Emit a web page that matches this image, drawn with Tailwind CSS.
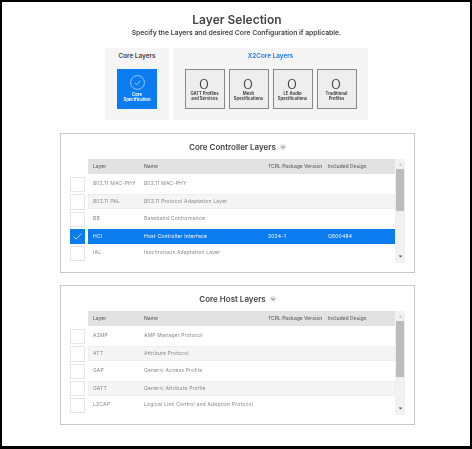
<!DOCTYPE html>
<html><head><meta charset="utf-8"><script src="https://cdn.jsdelivr.net/npm/@tailwindcss/browser@4"></script></head>
<body class="bg-white">
<div class="w-[472px] h-[449px] overflow-hidden border-x-2 border-t-2 border-b-[3px] border-black bg-white font-['Inter','Liberation_Sans',sans-serif] text-[#555] flex flex-col items-center">
  <h1 class="mt-[10px] ml-[2px] h-[16px] leading-[16px] text-[12px] font-semibold text-[#444] blur-[0.3px]">Layer Selection</h1>
  <p class="ml-[1px] h-[10px] leading-[10px] text-[6.8px] font-semibold text-[#444] blur-[0.3px]">Specify the Layers and desired Core Configuration if applicable.</p>
  <div class="mt-[10px] ml-[1px] w-[263px] flex gap-[4px] blur-[0.3px]">
    <div class="w-[64px] h-[72px] bg-[#f5f5f5] flex flex-col items-center">
      <div class="mt-[3px] h-[10px] leading-[10px] text-[6.4px] font-semibold text-[#444]">Core Layers</div>
      <div class="mt-[8px] w-[40px] h-[40px] bg-[#0a7cf0] flex flex-col items-center text-white">
        <svg class="mt-[6px]" width="15" height="15" viewBox="0 0 15 15" fill="none" stroke="#d6e9ff" stroke-width="0.7"><circle cx="7.5" cy="7.5" r="6.9"/><path d="M4.6 7.7l2 2 3.8-4"/></svg>
        <div class="mt-[2px] text-[4.2px] leading-[5px] font-bold text-center">Core<br>Specification</div>
      </div>
    </div>
    <div class="flex-1 h-[72px] bg-[#f5f5f5] flex flex-col items-center">
      <div class="mt-[3px] h-[10px] leading-[10px] text-[6.4px] font-semibold text-[#1d78e6]">X2Core Layers</div>
      <div class="mt-[8px] flex gap-[4px]">
        <div class="w-[40px] h-[40px] border border-[#888] bg-[#eeeeee] flex flex-col items-center"><div class="mt-[7px] h-[14px] leading-[14px] text-[13px] font-light scale-x-[1.3] text-[#444]">0</div><div class="text-[4.2px] leading-[5.3px] font-bold text-center text-[#444]">GATT Profiles<br>and Services</div></div>
        <div class="w-[40px] h-[40px] border border-[#888] bg-[#eeeeee] flex flex-col items-center"><div class="mt-[7px] h-[14px] leading-[14px] text-[13px] font-light scale-x-[1.3] text-[#444]">0</div><div class="text-[4.2px] leading-[5.3px] font-bold text-center text-[#444]">Mesh<br>Specifications</div></div>
        <div class="w-[40px] h-[40px] border border-[#888] bg-[#eeeeee] flex flex-col items-center"><div class="mt-[7px] h-[14px] leading-[14px] text-[13px] font-light scale-x-[1.3] text-[#444]">0</div><div class="text-[4.2px] leading-[5.3px] font-bold text-center text-[#444]">LE Audio<br>Specifications</div></div>
        <div class="w-[40px] h-[40px] border border-[#888] bg-[#eeeeee] flex flex-col items-center"><div class="mt-[7px] h-[14px] leading-[14px] text-[13px] font-light scale-x-[1.3] text-[#444]">0</div><div class="text-[4.2px] leading-[5.3px] font-bold text-center text-[#444]">Traditional<br>Profiles</div></div>
      </div>
    </div>
  </div>

  <section class="mt-[13px] ml-[3px] w-[355px] h-[140px] shrink-0 border border-[#c8c8c8] bg-white pl-[9px] pt-[7px] blur-[0.3px]">
    <div class="h-[12px] ml-[-9px] flex items-center justify-center gap-[4px] text-[8px] leading-[12px] font-semibold text-[#444]">Core Controller Layers
      <svg width="6" height="6" viewBox="0 0 6 6"><circle cx="3" cy="3" r="3" fill="#e4e4e4"/><path d="M1.6 2.4L3 3.9l1.4-1.5" fill="none" stroke="#555" stroke-width="0.8"/></svg>
    </div>
    <div class="mt-[6px] flex">
      <div class="w-[15px] mr-[3px] flex flex-col pt-[18px]">
        <div class="w-[15px] h-[15.3px] mb-[2px] border border-[#e5e5e5] bg-white"></div>
        <div class="w-[15px] h-[15.3px] mb-[2px] border border-[#e5e5e5] bg-white"></div>
        <div class="w-[15px] h-[15.3px] mb-[2px] border border-[#e5e5e5] bg-white"></div>
        <div class="w-[15px] h-[15.3px] mb-[2px] bg-[#0a7cf0] flex items-center justify-center"><svg width="11" height="11" viewBox="0 0 11 11" fill="none" stroke="#fff" stroke-width="0.7"><path d="M1.8 5.8l2.4 2.4 5.2-5.6"/></svg></div>
        <div class="w-[15px] h-[15.3px] border border-[#e5e5e5] bg-white"></div>
      </div>
      <div class="w-[307px] text-[5px] tracking-[0.2px] text-[#888]">
        <div class="h-[15px] bg-[#e2e2e2] flex items-center text-[#666] font-medium tracking-normal"><span class="w-[56px] pl-[5px]">Layer</span><span class="w-[124px]">Name</span><span class="w-[60px]">TCRL Package Version</span><span>Included Design</span></div>
        <div class="h-[18px] mt-[1px] flex items-center"><span class="w-[56px] pl-[5px]">802.11 MAC-PHY</span><span class="w-[124px]">802.11 MAC-PHY</span></div>
        <div class="h-[15.3px] mt-[1px] flex items-center bg-[#f5f5f5] border border-[#eee]"><span class="w-[55px] pl-[4px]">802.11 PAL</span><span class="w-[124px]">802.11 Protocol Adaptation Layer</span></div>
        <div class="h-[17.4px] mt-[1px] flex items-center"><span class="w-[56px] pl-[5px]">BB</span><span class="w-[124px]">Baseband Conformance</span></div>
        <div class="h-[15.3px] mt-[1px] flex items-center bg-[#0a7cf0] text-white"><span class="w-[56px] pl-[5px]">HCI</span><span class="w-[124px]">Host Controller Interface</span><span class="w-[60px]">2024-1</span><span>Q500464</span></div>
        <div class="h-[17.3px] flex items-center"><span class="w-[56px] pl-[5px]">IAL</span><span class="w-[124px]">Isochronous Adaptation Layer</span></div>
      </div>
      <div class="w-[10px] h-[104px] bg-[#f1f1f1] flex flex-col items-center">
        <svg class="mt-[4px]" width="5" height="3" viewBox="0 0 5 3"><path d="M2.5 0.4L4.4 2.6H0.6z" fill="#c0c0c0"/></svg>
        <div class="mt-[3px] w-[8px] h-[42px] bg-[#bcbcbc]"></div>
        <svg class="mt-[44px]" width="5" height="3" viewBox="0 0 5 3"><path d="M2.5 2.6L4.4 0.4H0.6z" fill="#555"/></svg>
      </div>
    </div>
  </section>

  <section class="mt-[12px] ml-[3px] w-[355px] h-[140px] shrink-0 border border-[#c8c8c8] bg-white pl-[9px] pt-[7px] blur-[0.3px]">
    <div class="h-[12px] ml-[-9px] flex items-center justify-center gap-[4px] text-[8px] leading-[12px] font-semibold text-[#444]">Core Host Layers
      <svg width="6" height="6" viewBox="0 0 6 6"><circle cx="3" cy="3" r="3" fill="#e4e4e4"/><path d="M1.6 2.4L3 3.9l1.4-1.5" fill="none" stroke="#555" stroke-width="0.8"/></svg>
    </div>
    <div class="mt-[6px] flex">
      <div class="w-[15px] mr-[3px] flex flex-col pt-[18px]">
        <div class="w-[15px] h-[15.3px] mb-[2px] border border-[#e5e5e5] bg-white"></div>
        <div class="w-[15px] h-[15.3px] mb-[2px] border border-[#e5e5e5] bg-white"></div>
        <div class="w-[15px] h-[15.3px] mb-[2px] border border-[#e5e5e5] bg-white"></div>
        <div class="w-[15px] h-[15.3px] mb-[2px] border border-[#e5e5e5] bg-white"></div>
        <div class="w-[15px] h-[15.3px] border border-[#e5e5e5] bg-white"></div>
      </div>
      <div class="w-[307px] text-[5px] tracking-[0.2px] text-[#888]">
        <div class="h-[15px] bg-[#e2e2e2] flex items-center text-[#666] font-medium tracking-normal"><span class="w-[56px] pl-[5px]">Layer</span><span class="w-[124px]">Name</span><span class="w-[60px]">TCRL Package Version</span><span>Included Design</span></div>
        <div class="h-[18px] mt-[1px] flex items-center"><span class="w-[56px] pl-[5px]">A2MP</span><span class="w-[124px]">AMP Manager Protocol</span></div>
        <div class="h-[15.3px] mt-[1px] flex items-center bg-[#f5f5f5] border border-[#eee]"><span class="w-[55px] pl-[4px]">ATT</span><span class="w-[124px]">Attribute Protocol</span></div>
        <div class="h-[17.4px] mt-[1px] flex items-center"><span class="w-[56px] pl-[5px]">GAP</span><span class="w-[124px]">Generic Access Profile</span></div>
        <div class="h-[15.3px] mt-[1px] flex items-center bg-[#f5f5f5] border border-[#eee]"><span class="w-[55px] pl-[4px]">GATT</span><span class="w-[124px]">Generic Attribute Profile</span></div>
        <div class="h-[17.3px] flex items-center"><span class="w-[56px] pl-[5px]">L2CAP</span><span class="w-[200px]">Logical Link Control and Adaption Protocol</span></div>
      </div>
      <div class="w-[10px] h-[104px] bg-[#f1f1f1] flex flex-col items-center">
        <svg class="mt-[4px]" width="5" height="3" viewBox="0 0 5 3"><path d="M2.5 0.4L4.4 2.6H0.6z" fill="#c0c0c0"/></svg>
        <div class="mt-[3px] w-[8px] h-[56px] bg-[#bcbcbc]"></div>
        <svg class="mt-[30px]" width="5" height="3" viewBox="0 0 5 3"><path d="M2.5 2.6L4.4 0.4H0.6z" fill="#555"/></svg>
      </div>
    </div>
  </section>
</div>
</body></html>
